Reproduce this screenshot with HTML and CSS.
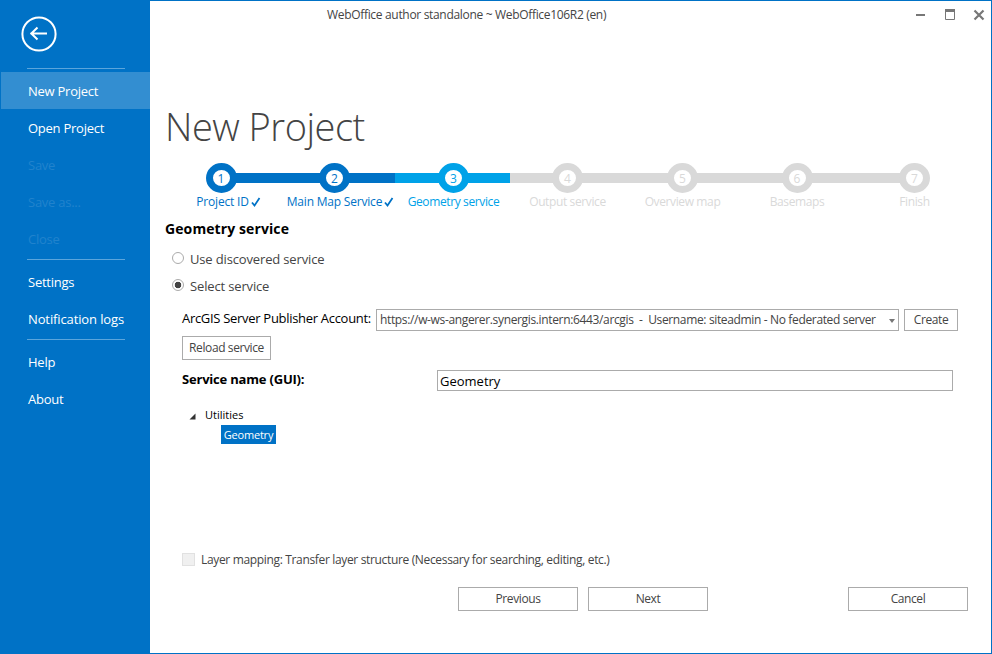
FILE: index.html
```html
<!DOCTYPE html>
<html lang="en">
<head>
    <meta charset="UTF-8">
    <title>WebOffice author standalone</title>
    <link rel="stylesheet" href="styles.css">
</head>
<body>
    <div class="window">
        <nav class="sidebar">
            <button class="back">
                <svg width="36" height="36" viewBox="0 0 36 36" fill="none" stroke="#fff">
                    <circle cx="18" cy="18" r="16.6" stroke-width="2"/>
                    <path d="M9.5 17.5H26M16.500 11.500l-6.200 6 6.200 6" stroke-width="2"/>
                </svg>
            </button>
            <div class="line"></div>
            <a class="item active">New Project</a>
            <a class="item">Open Project</a>
            <a class="item disabled">Save</a>
            <a class="item disabled">Save as...</a>
            <a class="item disabled">Close</a>
            <div class="line"></div>
            <a class="item">Settings</a>
            <a class="item logs">Notification logs</a>
            <div class="line"></div>
            <a class="item">Help</a>
            <a class="item">About</a>
        </nav>

        <main class="main">
            <header class="titlebar">
                <span class="caption">WebOffice author standalone ~ WebOffice106R2 (en)</span>
                <svg class="controls" width="70" height="12" viewBox="0 0 70 12" fill="none" stroke="#777">
                    <path d="M0 6h9" stroke-width="2"/>
                    <path d="M29.5 1v9.500h9V1" stroke-width="1"/>
                    <path d="M29 1.500h10" stroke-width="3"/>
                    <path d="M58.500 1.500l9 9M67.500 1.500l-9 9" stroke-width="2.200"/>
                </svg>
            </header>

            <h1>New Project</h1>

            <div class="steps">
                <div class="step done first"><b>1</b><span>Project ID<svg class="check" width="10" height="10" viewBox="0 0 10 10"><path d="M1 5.500l2.500 3L8.500 1" fill="none" stroke="currentColor" stroke-width="1.800"/></svg></span></div>
                <div class="step done"><b>2</b><span>Main Map Service<svg class="check" width="10" height="10" viewBox="0 0 10 10"><path d="M1 5.500l2.500 3L8.500 1" fill="none" stroke="currentColor" stroke-width="1.800"/></svg></span></div>
                <div class="step current"><b>3</b><span>Geometry service</span></div>
                <div class="step"><b>4</b><span>Output service</span></div>
                <div class="step"><b>5</b><span>Overview map</span></div>
                <div class="step"><b>6</b><span>Basemaps</span></div>
                <div class="step"><b>7</b><span>Finish</span></div>
            </div>

            <h2>Geometry service</h2>

            <div class="options">
                <label class="radio"><i></i><span>Use discovered service</span></label>
                <label class="radio checked"><i></i><span>Select service</span></label>
            </div>

            <div class="form">
                <div class="row">
                    <span class="account">ArcGIS Server Publisher Account:</span>
                    <div class="select">
                        <span>https://w-ws-angerer.synergis.intern:6443/arcgis&nbsp; -&nbsp; Username: siteadmin - No federated server</span>
                        <i class="arrow"></i>
                    </div>
                    <button class="btn create">Create</button>
                </div>
                <button class="btn reload">Reload service</button>
                <div class="row name-row">
                    <span class="name-label">Service name (GUI):</span>
                    <div class="textbox">Geometry</div>
                </div>
                <div class="tree">
                    <div class="node"><svg width="7" height="7" viewBox="0 0 7 7"><path d="M6.500.5v6h-6z" fill="#333"/></svg><span>Utilities</span></div>
                    <div class="leaf">Geometry</div>
                </div>
                <label class="mapping"><i></i><span>Layer mapping: Transfer layer structure (Necessary for searching, editing, etc.)</span></label>
            </div>

            <footer class="footer">
                <button class="btn">Previous</button>
                <button class="btn">Next</button>
                <button class="btn cancel">Cancel</button>
            </footer>
        </main>
    </div>
</body>
</html>
```
FILE: styles.css
```css
* {
    margin: 0;
    padding: 0;
    box-sizing: border-box;
}

body {
    font-family: "Open Sans", "Noto Sans", sans-serif;
    font-size: 12px;
    color: #444;
}

button {
    font: inherit;
    color: inherit;
}

.window {
    display: flex;
    width: 992px;
    height: 654px;
    border: 1px solid #0072c6;
    background: #fff;
    overflow: hidden;
    white-space: nowrap;
}

/* Sidebar */
.sidebar {
    width: 149px;
    background: #0072c6;
    color: #fff;
}

.back {
    display: block;
    width: 36px;
    height: 36px;
    margin: 15px 0 14px 20px;
    border: none;
    background: none;
}

.line {
    height: 6px;
    margin: 0 25px 0 26px;
    background: linear-gradient(#5ba5dc, #5ba5dc) 0 2px / 100% 1px no-repeat;
}

.item {
    display: block;
    height: 37px;
    padding-left: 27px;
    line-height: 38px;
    font-size: 13px;
    letter-spacing: -0.25px;
}

.item.logs {
    letter-spacing: -0.12px;
}

.item.active {
    background: #338ed1;
}

.item.disabled {
    color: #2083cd;
}

/* Title bar */
.main {
    flex: 1;
    padding-left: 15px;
}

.titlebar {
    position: relative;
    height: 100px;
    padding-left: 162px;
    line-height: 27px;
}

.caption {
    letter-spacing: -0.32px;
}

.controls {
    position: absolute;
    right: 5px;
    top: 8px;
}

h1 {
    height: 62px;
    line-height: 50px;
    font-size: 38px;
    font-weight: 300;
    letter-spacing: -0.5px;
}

/* Wizard steps */
.steps {
    display: grid;
    grid-template-columns: 114px 113px 125px 103px 127px 102px 133px;
    height: 54px;
    margin-left: -1px;
    color: #d9d9d9;
    background: linear-gradient(90deg, #0072c6 174px, #00a2e8 174px 289px, #d9d9d9 289px) 57px 10px / 693px 10px no-repeat;
}

.step {
    display: flex;
    flex-direction: column;
    align-items: center;
}

.step b {
    width: 31px;
    height: 30px;
    border: 7px solid #d9d9d9;
    border-radius: 50%;
    background: #fff;
    font-weight: 400;
    font-size: 12px;
    line-height: 17px;
    text-align: center;
}

.step span {
    position: relative;
    line-height: 18px;
    letter-spacing: -0.38px;
}

.step.done {
    color: #0072c6;
}

.step.done span {
    letter-spacing: -0.2px;
}

.step.first span {
    padding-left: 3px;
}

.step.done b {
    border-color: #0072c6;
}

.step.current {
    color: #00a2e8;
}

.step.current b {
    border-color: #00a2e8;
}

.check {
    position: absolute;
    left: calc(100% + 2px);
    top: 4px;
}

h2 {
    height: 26px;
    line-height: 23px;
    font-size: 14px;
    font-weight: 700;
    color: #000;
    letter-spacing: 0.1px;
}

/* Radio buttons */
.options {
    padding-left: 7px;
}

.radio {
    display: flex;
    gap: 6px;
    height: 27px;
    line-height: 32px;
    font-size: 13px;
    letter-spacing: -0.15px;
}

.radio i {
    width: 12px;
    height: 12px;
    margin-top: 9px;
    border: 1px solid #ababab;
    border-radius: 50%;
}

.radio.checked i {
    background: radial-gradient(#444 3px, #fff 3.6px);
}

/* Form */
.form {
    height: 290px;
    padding: 12px 0 0 17px;
}

.row {
    display: flex;
    align-items: flex-start;
}

.account {
    width: 194px;
    font-size: 13px;
    color: #000;
    line-height: 19px;
    letter-spacing: -0.3px;
}

.select {
    position: relative;
    width: 523px;
    height: 22px;
    padding-left: 3px;
    border: 1px solid #ababab;
    line-height: 19px;
    letter-spacing: -0.35px;
}

.arrow {
    position: absolute;
    right: 3px;
    top: 9px;
    border: 3px solid transparent;
    border-top: 4px solid #777;
    border-bottom: 0;
}

.btn {
    width: 120px;
    height: 24px;
    border: 1px solid #ababab;
    background: #fff;
    line-height: 20px;
    letter-spacing: -0.4px;
}

.btn.create {
    width: 54px;
    height: 22px;
    margin-left: 5px;
    line-height: 18px;
}

.btn.reload {
    display: block;
    width: 89px;
    margin-top: 5px;
}

.name-row {
    margin-top: 10px;
}

.name-label {
    width: 255px;
    font-size: 13px;
    font-weight: 700;
    color: #000;
    line-height: 19px;
    letter-spacing: -0.2px;
}

.textbox {
    width: 516px;
    height: 21px;
    padding-left: 2px;
    border: 1px solid #ababab;
    font-size: 13px;
    line-height: 20px;
    color: #000;
}

/* Service tree */
.tree {
    height: 162px;
    padding: 16px 0 0 7px;
    font-size: 11px;
    color: #000;
}

.node {
    display: flex;
    align-items: center;
    gap: 9px;
    height: 18px;
}

.node span {
    line-height: 16px;
    padding-bottom: 2px;
}

.leaf {
    width: 55px;
    height: 19px;
    margin-left: 32px;
    background: #0072c6;
    color: #fff;
    line-height: 19px;
    letter-spacing: -0.2px;
    text-align: center;
}

.mapping {
    display: flex;
    gap: 6px;
    line-height: 14px;
    letter-spacing: -0.34px;
}

.mapping i {
    width: 13px;
    height: 13px;
    border: 1px solid #e1e1e1;
    background: #f0f0f0;
}

/* Bottom buttons */
.footer {
    display: flex;
    gap: 10px;
    padding-left: 293px;
}

.cancel {
    margin-left: 130px;
}
```
